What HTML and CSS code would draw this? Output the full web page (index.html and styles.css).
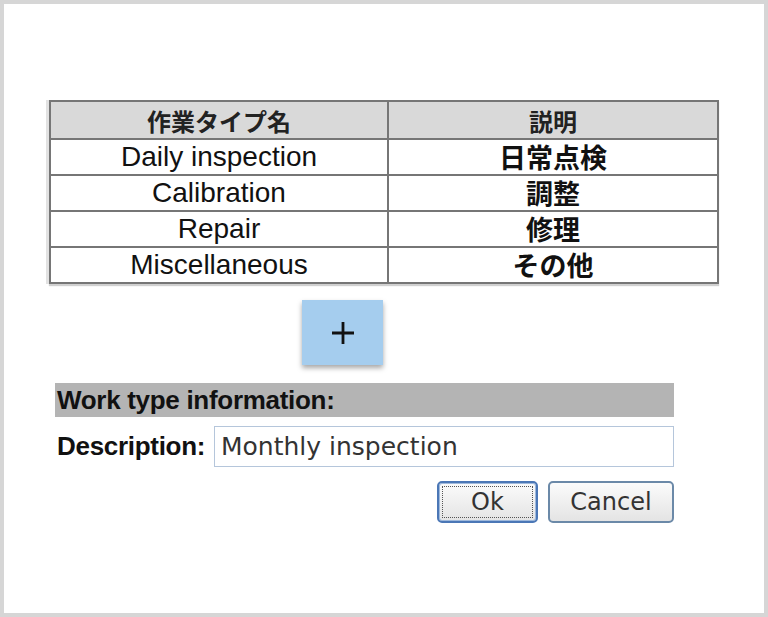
FILE: index.html
```html
<!DOCTYPE html>
<html lang="ja">
<head>
    <meta charset="UTF-8">
    <meta name="viewport" content="width=device-width, initial-scale=1.0">
    <title>Work types</title>
    <link rel="stylesheet" href="styles.css">
</head>
<body>

    <div class="frame">

        <!-- Work type list -->
        <table class="types">
            <thead>
                <tr>
                    <th class="col-name">作業タイプ名</th>
                    <th>説明</th>
                </tr>
            </thead>
            <tbody>
                <tr><td class="col-name">Daily inspection</td><td class="jp">日常点検</td></tr>
                <tr><td class="col-name">Calibration</td><td class="jp">調整</td></tr>
                <tr><td class="col-name">Repair</td><td class="jp">修理</td></tr>
                <tr><td class="col-name">Miscellaneous</td><td class="jp">その他</td></tr>
            </tbody>
        </table>

        <button class="add-btn" title="Add">
            <svg width="26" height="26" viewBox="0 0 26 26">
                <path d="M13 2 V24 M2 13 H24" stroke="#111" stroke-width="2.8" fill="none"/>
            </svg>
        </button>

        <!-- Edit form -->
        <div class="info">
            <div class="info-title">Work type information:</div>
            <div class="info-row">
                <label for="desc">Description:</label>
                <input type="text" id="desc" value="Monthly inspection">
            </div>
            <div class="actions">
                <button class="btn btn-ok"><span>Ok</span></button>
                <button class="btn">Cancel</button>
            </div>
        </div>

    </div>

</body>
</html>
```

FILE: styles.css
```css
body {
    margin: 0;
    background-color: #fff;
    font-family: "Liberation Sans", Arial, "Noto Sans CJK JP", sans-serif;
    color: #111;
}

.frame {
    width: 768px;
    height: 617px;
    box-sizing: border-box;
    border: 4px solid #d6d6d6;
    background-color: #fff;
    padding-top: 96px;
    overflow: hidden;
}

.types {
    margin-left: 45px;
    width: 670px;
    border-collapse: collapse;
    border: 2px solid #666;
    box-shadow: -3px 0 0 #e2e2e2, 0 2px 1px #d0d0d0;
}

.types th,
.types td {
    border: 2px solid #767676;
    text-align: center;
    padding: 0;
}

.types th {
    height: 36px;
    background-color: #d9d9d9;
    font-family: "Noto Sans CJK JP", sans-serif;
    font-size: 24px;
    font-weight: 700;
    color: #222;
}

.types td {
    height: 34px;
    font-size: 28px;
    line-height: 34px;
}

.types .col-name {
    width: 336px;
}

.types td.jp {
    font-family: "Noto Sans CJK JP", sans-serif;
    font-size: 27px;
    font-weight: 700;
}

.add-btn {
    display: flex;
    align-items: center;
    justify-content: center;
    margin: 16px 0 0 298px;
    width: 81px;
    height: 65px;
    border: none;
    background-color: #a5cdee;
    box-shadow: 0 3px 5px rgba(0, 0, 0, 0.35);
    padding: 0;
}

.info {
    margin: 18px 0 0 51px;
    width: 619px;
}

.info-title {
    height: 34px;
    line-height: 34px;
    background-color: #b4b4b4;
    padding-left: 2px;
    font-size: 26px;
    font-weight: bold;
    letter-spacing: -0.3px;
    color: #111;
}

.info-row {
    display: flex;
    align-items: center;
    margin-top: 9px;
}

.info-row label {
    width: 157px;
    padding-left: 2px;
    font-size: 26px;
    font-weight: bold;
    letter-spacing: -0.3px;
}

.info-row input {
    width: 460px;
    height: 41px;
    box-sizing: border-box;
    border: 1px solid #b5c6db;
    padding: 0 6px;
    font-family: "DejaVu Sans", sans-serif;
    font-size: 25px;
    color: #333;
    outline: none;
}

.actions {
    display: flex;
    justify-content: flex-end;
    gap: 10px;
    margin-top: 14px;
}

.btn {
    height: 42px;
    width: 126px;
    border: 2px solid #6b89a8;
    border-radius: 5px;
    background: linear-gradient(#fbfbfb, #e4e4e4);
    font-family: "DejaVu Sans", sans-serif;
    font-size: 24px;
    color: #333;
    padding: 0;
}

.btn-ok {
    width: 101px;
    border-color: #4b77b6;
    box-shadow: inset 0 0 0 1px #9fb9dc;
    padding: 3px;
}

.btn-ok span {
    display: block;
    height: 100%;
    line-height: 30px;
    border: 1px dotted #555;
    box-sizing: border-box;
}
```
